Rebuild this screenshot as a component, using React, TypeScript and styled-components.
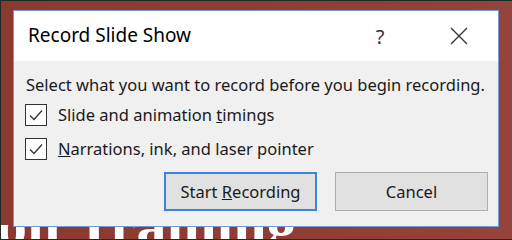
import React from "react";
import styled, { createGlobalStyle } from "styled-components";

const GlobalStyle = createGlobalStyle`
  html, body { margin: 0; padding: 0; }
  body { width: 512px; height: 240px; overflow: hidden; background: #8d3c32; }
  * { box-sizing: border-box; }
`;

const Stage = styled.div`
  position: relative;
  width: 512px;
  height: 240px;
  overflow: hidden;
  background: linear-gradient(90deg, #8a3a30 0%, #8f3e34 60%, #94443a 100%);
  border-top: 1px solid #1d2a2a;
  border-left: 1px solid #1d2a2a;
  border-bottom: 1px solid #1d2a2a;
  display: flex;
  flex-direction: column;
`;

const SlideStrip = styled.div`
  margin-top: 224px;
  height: 14px;
  overflow: hidden;
`;

const SlideTitle = styled.div`
  margin-top: -15px;
  margin-left: -4px;
  font-family: "Liberation Serif", "DejaVu Serif", serif;
  font-weight: bold;
  font-size: 60px;
  line-height: 30px;
  color: #ffffff;
  white-space: nowrap;
`;

const Dialog = styled.div`
  position: absolute;
  left: 12px;
  top: 9px;
  width: 486px;
  height: 217px;
  border: 1px solid #6f9ad8;
  background: #f0f0f0;
  display: flex;
  flex-direction: column;
  font-family: "Segoe UI", "Noto Sans", "Open Sans", sans-serif;
  color: #1a1a1a;
`;

const TitleBar = styled.div`
  height: 50px;
  background: #ffffff;
  display: flex;
  align-items: center;
  padding-left: 14px;
`;

const Title = styled.div`
  flex: 1;
  font-size: 19px;
  color: #000;
  margin-top: -2px;
`;

const TitleButton = styled.div<{ $w: number }>`
  width: ${(p) => p.$w}px;
  height: 50px;
  display: flex;
  align-items: center;
  justify-content: center;
  color: #333;
  font-size: 20px;
`;

const Body = styled.div`
  flex: 1;
  display: flex;
  flex-direction: column;
  padding: 13px 10px 0 12px;
`;

const Instruction = styled.div`
  font-size: 16.5px;
  line-height: 22px;
  white-space: nowrap;
`;

const CheckRow = styled.label<{ $mt: number }>`
  display: flex;
  align-items: center;
  gap: 11px;
  margin-top: ${(p) => p.$mt}px;
  margin-left: -1px;
  font-size: 16.5px;
  line-height: 22px;
`;

const Box = styled.span`
  width: 22px;
  height: 22px;
  border: 1px solid #333;
  background: #fff;
  display: flex;
  align-items: center;
  justify-content: center;
`;

const Buttons = styled.div`
  display: flex;
  justify-content: flex-end;
  gap: 18px;
  margin-top: 12px;
`;

const Button = styled.button<{ $primary?: boolean }>`
  width: 153px;
  height: 39px;
  background: #e1e1e1;
  border: ${(p) => (p.$primary ? "2px solid #3a84dc" : "1px solid #adadad")};
  font-family: inherit;
  font-size: 16.5px;
  color: #1a1a1a;
  padding: 0;
`;

const Check = () => (
  <svg width="16" height="14" viewBox="0 0 16 14">
    <path d="M2 7.5 L6 11.5 L14 2.5" fill="none" stroke="#333" strokeWidth="1.3" />
  </svg>
);

export default function App() {
  return (
    <Stage>
      <GlobalStyle />
      <SlideStrip>
        <SlideTitle>on Training</SlideTitle>
      </SlideStrip>
      <Dialog>
        <TitleBar>
          <Title>Record Slide Show</Title>
          <TitleButton $w={80}>?</TitleButton>
          <TitleButton $w={78}>
            <svg width="18" height="18" viewBox="0 0 18 18">
              <path d="M1 1 L17 17 M17 1 L1 17" stroke="#333" strokeWidth="1.3" fill="none" />
            </svg>
          </TitleButton>
        </TitleBar>
        <Body>
          <Instruction>Select what you want to record before you begin recording.</Instruction>
          <CheckRow $mt={8}>
            <Box><Check /></Box>
            <span>Slide and animation <u>t</u>imings</span>
          </CheckRow>
          <CheckRow $mt={12}>
            <Box><Check /></Box>
            <span><u>N</u>arrations, ink, and laser pointer</span>
          </CheckRow>
          <Buttons>
            <Button $primary>Start <u>R</u>ecording</Button>
            <Button>Cancel</Button>
          </Buttons>
        </Body>
      </Dialog>
    </Stage>
  );
}
